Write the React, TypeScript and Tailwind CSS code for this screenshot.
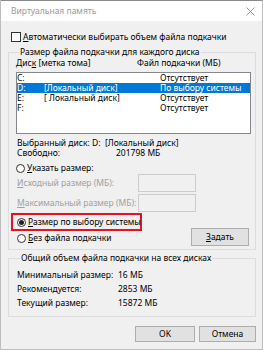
import React from 'react';

const font = { fontFamily: '"Noto Sans", "Open Sans", sans-serif' };

function Radio({ checked }: { checked?: boolean }) {
  return (
    <span className="w-[9px] h-[9px] rounded-full border border-[#333] bg-white flex items-center justify-center shrink-0">
      {checked && <span className="w-[5px] h-[5px] rounded-full bg-[#222]" />}
    </span>
  );
}

const drives = [
  { d: 'C:', label: '', size: 'Отсутствует' },
  { d: 'D:', label: '[Локальный диск]', size: 'По выбору системы', selected: true },
  { d: 'E:', label: '[ Локальный диск]', size: 'Отсутствует' },
  { d: 'F:', label: '', size: 'Отсутствует' },
];

const totals = [
  ['Минимальный размер:', '16 МБ'],
  ['Рекомендуется:', '2853 МБ'],
  ['Текущий размер:', '15872 МБ'],
];

export default function App() {
  return (
    <div
      className="w-[263px] h-[350px] bg-[#f0f0f0] text-[8.5px] leading-[10px] text-black border-x border-b border-[#bdbdbd] overflow-hidden whitespace-nowrap"
      style={font}
    >
      {/* Title bar */}
      <div className="h-[21px] bg-white border-t border-[#8a8a8a] flex items-center justify-between pl-[10px] pr-[7px]">
        <span className="text-[#9a9a9a]">Виртуальная память</span>
        <svg width="9" height="9" viewBox="0 0 9 9" className="text-[#8a8a8a]">
          <path d="M0.5 0.5 L8.5 8.5 M8.5 0.5 L0.5 8.5" stroke="currentColor" strokeWidth="0.9" />
        </svg>
      </div>

      <div className="px-[6px]">
        {/* Auto checkbox */}
        <div className="flex items-center gap-[2px] pl-[4px] mt-[11px] h-[10px]">
          <span className="w-[10px] h-[10px] border border-[#333] bg-white shrink-0" />
          <span>
            <u>А</u>втоматически выбирать объем файла подкачки
          </span>
        </div>

        {/* Per-drive group */}
        <fieldset className="mt-[5px] ml-[1px] border border-[#dcdcdc] px-[7px] pb-[3px] min-w-0">
          <legend className="ml-[3px] px-[1px] h-[10px] leading-[10px]">Размер файла подкачки для каждого диска</legend>
          <div className="h-[12px] flex items-center">
            <span className="w-[121px] shrink-0">
              Дис<u>к</u> [метка тома]
            </span>
            <span>Файл подкачки (МБ)</span>
          </div>
          <div className="mt-[3px] h-[62px] bg-white border border-[#828790] mr-[-3px]">
            {drives.map((r) => (
              <div
                key={r.d}
                className={`h-[10px] flex items-center ${r.selected ? 'bg-[#0078d7] text-white' : ''}`}
              >
                <span className="w-[27px] shrink-0">{r.d}</span>
                <span className="w-[116px] shrink-0">{r.label}</span>
                <span>{r.size}</span>
              </div>
            ))}
          </div>

          <div className="mt-[4px] pl-[1px]">
            <div className="h-[10px] flex items-center">
              <span className="w-[75px] shrink-0">Выбранный диск:</span>
              <span>D:&nbsp;&nbsp;[Локальный диск]</span>
            </div>
            <div className="h-[10px] flex items-center">
              <span className="w-[99px] shrink-0">Свободно:</span>
              <span>201798 МБ</span>
            </div>
          </div>

          <div className="mt-[4px] h-[12px] flex items-center gap-[2px]">
            <Radio />
            <span>
              <u>У</u>казать размер:
            </span>
          </div>
          <div className="h-[18px] flex items-center pl-[1px]">
            <span className="w-[121px] shrink-0 text-[#a0a0a0]">
              <u>И</u>сходный размер (МБ):
            </span>
            <span className="w-[58px] h-[18px] border border-[#cccccc] bg-[#f0f0f0]" />
          </div>
          <div className="mt-[2px] h-[18px] flex items-center pl-[1px]">
            <span className="w-[121px] shrink-0 text-[#a0a0a0]">
              <u>М</u>аксимальный размер (МБ):
            </span>
            <span className="w-[58px] h-[18px] border border-[#cccccc] bg-[#f0f0f0]" />
          </div>

          <div className="mt-[1px] h-[33px] flex justify-between">
            <div className="flex flex-col ml-[-5px]">
              <div className="w-[131px] h-[18px] border-2 border-[#e81123] flex items-center gap-[2px] pl-[4px]">
                <Radio checked />
                <span>
                  <u>Р</u>азмер по выбору системы
                </span>
              </div>
              <div className="h-[14px] flex items-center gap-[2px] pl-[6px]">
                <Radio />
                <span>
                  <u>Б</u>ез файла подкачки
                </span>
              </div>
            </div>
            <button className="self-end w-[58px] h-[18px] bg-[#e1e1e1] border border-[#adadad] mr-[-1px]">
              <u>З</u>адать
            </button>
          </div>
        </fieldset>

        {/* Totals group */}
        <fieldset className="mt-[3px] ml-[1px] border border-[#dcdcdc] px-[8px] pt-[5px] pb-[6px] min-w-0">
          <legend className="ml-[3px] px-[1px] h-[10px] leading-[10px]">Общий объем файла подкачки на всех дисках</legend>
          {totals.map(([k, v]) => (
            <div key={k} className="h-[14px] flex items-center">
              <span className="w-[101px] shrink-0">{k}</span>
              <span>{v}</span>
            </div>
          ))}
        </fieldset>

        <div className="mt-[9px] flex justify-end gap-[4px]">
          <button className="w-[60px] h-[16px] bg-[#e1e1e1] border border-[#adadad]">OK</button>
          <button className="w-[57px] h-[16px] bg-[#e1e1e1] border border-[#adadad]">Отмена</button>
        </div>
      </div>
    </div>
  );
}
